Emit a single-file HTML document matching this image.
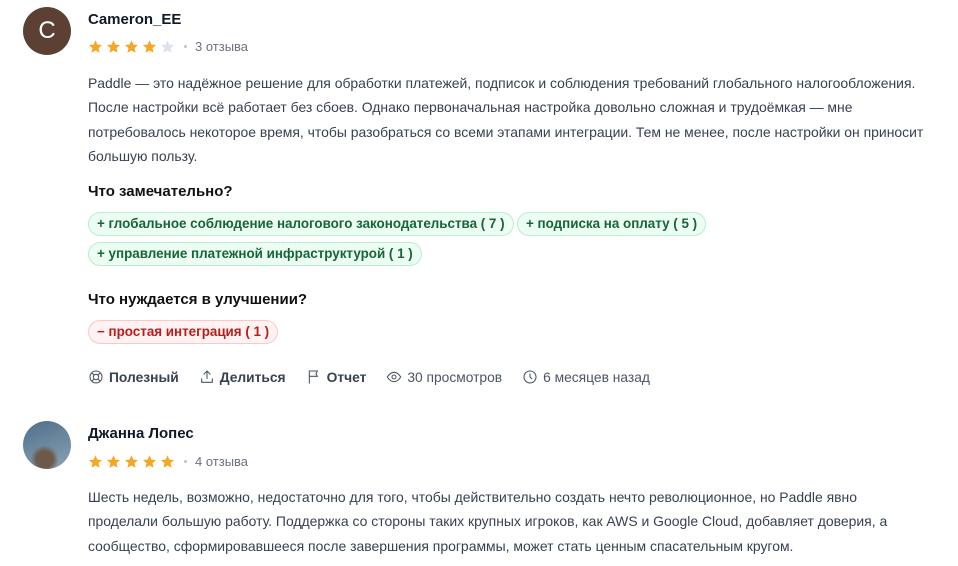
<!DOCTYPE html>
<html><head><meta charset="utf-8"><style>
*{margin:0;padding:0;box-sizing:border-box}
body{width:958px;height:566px;overflow:hidden;background:#fff;font-family:"Liberation Sans","Noto Sans CJK SC",sans-serif;color:#1f2328;position:relative}
.abs{position:absolute}
.av{left:23px;width:48px;height:48px;border-radius:50%}
.name{left:88px;font-size:15px;font-weight:bold;color:#111827}
.stars{left:88px;font-size:13px;display:flex;align-items:center;color:#6b7280}
.stars svg{width:15px;height:15px;margin-right:3px}
.dot{width:3px;height:3px;border-radius:50%;background:#c0c4cc;margin:0 8px 0 6px}
.txt{left:88px;width:870px;font-size:13.95px;line-height:24.3px;color:#374151;white-space:nowrap}
.h{left:88px;font-size:15px;font-weight:bold;color:#111}
.chip{position:absolute;height:24px;border-radius:12px;font-size:13.4px;font-weight:bold;line-height:22px;padding:0 8px;white-space:nowrap}
.g{background:#ecfdf3;border:1px solid #b7efcc;color:#166534}
.r{background:#fef2f2;border:1px solid #fcc9c9;color:#b91c1c}
.act{position:absolute;top:369px;left:88px;display:flex;font-size:13.8px;color:#4b5563;align-items:center}
.act span{display:flex;align-items:center;margin-right:20px}
.act svg{width:16px;height:16px;margin-right:5px;fill:none;stroke:#4b5563;stroke-width:1.6}
.b{font-weight:bold;color:#374151}
</style></head><body>
<div class="abs av" style="top:7px;background:#5c4033;color:#fff;font-size:24px;text-align:center;line-height:48px">C</div>
<div class="abs name" style="top:11px">Cameron_EE</div>
<div class="abs stars" style="top:39px">
<svg viewBox="0 0 24 24"><path fill="#f5a623" d="M12 2l3 6.9 7.5.7-5.7 5 1.7 7.4L12 18.3 5.5 22l1.7-7.4-5.7-5 7.5-.7z"/></svg>
<svg viewBox="0 0 24 24"><path fill="#f5a623" d="M12 2l3 6.9 7.5.7-5.7 5 1.7 7.4L12 18.3 5.5 22l1.7-7.4-5.7-5 7.5-.7z"/></svg>
<svg viewBox="0 0 24 24"><path fill="#f5a623" d="M12 2l3 6.9 7.5.7-5.7 5 1.7 7.4L12 18.3 5.5 22l1.7-7.4-5.7-5 7.5-.7z"/></svg>
<svg viewBox="0 0 24 24"><path fill="#f5a623" d="M12 2l3 6.9 7.5.7-5.7 5 1.7 7.4L12 18.3 5.5 22l1.7-7.4-5.7-5 7.5-.7z"/></svg>
<svg viewBox="0 0 24 24"><path fill="#dde3ec" d="M12 2l3 6.9 7.5.7-5.7 5 1.7 7.4L12 18.3 5.5 22l1.7-7.4-5.7-5 7.5-.7z"/></svg>
<div class="dot"></div>3 отзыва</div>
<div class="abs txt" style="top:71px">Paddle — это надёжное решение для обработки платежей, подписок и соблюдения требований глобального налогообложения.<br>После настройки всё работает без сбоев. Однако первоначальная настройка довольно сложная и трудоёмкая — мне<br>потребовалось некоторое время, чтобы разобраться со всеми этапами интеграции. Тем не менее, после настройки он приносит<br>большую пользу.</div>
<div class="abs h" style="top:183px">Что замечательно?</div>
<div class="chip g" style="left:88px;top:212px">+ глобальное соблюдение налогового законодательства ( 7 )</div>
<div class="chip g" style="left:517px;top:212px">+ подписка на оплату ( 5 )</div>
<div class="chip g" style="left:88px;top:242px">+ управление платежной инфраструктурой ( 1 )</div>
<div class="abs h" style="top:291px">Что нуждается в улучшении?</div>
<div class="chip r" style="left:88px;top:320px">− простая интеграция ( 1 )</div>
<div class="act">
<span class="b"><svg viewBox="0 0 24 24"><circle cx="12" cy="12" r="9"/><circle cx="12" cy="12" r="4"/><path d="M5.6 5.6l3.6 3.6M18.4 5.6l-3.6 3.6M5.6 18.4l3.6-3.6M18.4 18.4l-3.6-3.6"/></svg>Полезный</span>
<span class="b"><svg viewBox="0 0 24 24"><path d="M12 15V3M7 8l5-5 5 5M4 14v6h16v-6"/></svg>Делиться</span>
<span class="b"><svg viewBox="0 0 24 24"><path d="M5 22V3h12l-2 4 2 4H5"/></svg>Отчет</span>
<span><svg viewBox="0 0 24 24"><path d="M2 12s4-7 10-7 10 7 10 7-4 7-10 7S2 12 2 12z"/><circle cx="12" cy="12" r="3"/></svg>30 просмотров</span>
<span><svg viewBox="0 0 24 24"><circle cx="12" cy="12" r="9"/><path d="M12 7v5l3 3"/></svg>6 месяцев назад</span>
</div>
<div class="abs av" style="top:421px;background:radial-gradient(circle at 45% 80%,#6b5a4a 0 18%,transparent 30%),linear-gradient(160deg,#4e6f8a,#8aa3b5)"></div>
<div class="abs name" style="top:425px">Джанна Лопес</div>
<div class="abs stars" style="top:454px">
<svg viewBox="0 0 24 24"><path fill="#f5a623" d="M12 2l3 6.9 7.5.7-5.7 5 1.7 7.4L12 18.3 5.5 22l1.7-7.4-5.7-5 7.5-.7z"/></svg>
<svg viewBox="0 0 24 24"><path fill="#f5a623" d="M12 2l3 6.9 7.5.7-5.7 5 1.7 7.4L12 18.3 5.5 22l1.7-7.4-5.7-5 7.5-.7z"/></svg>
<svg viewBox="0 0 24 24"><path fill="#f5a623" d="M12 2l3 6.9 7.5.7-5.7 5 1.7 7.4L12 18.3 5.5 22l1.7-7.4-5.7-5 7.5-.7z"/></svg>
<svg viewBox="0 0 24 24"><path fill="#f5a623" d="M12 2l3 6.9 7.5.7-5.7 5 1.7 7.4L12 18.3 5.5 22l1.7-7.4-5.7-5 7.5-.7z"/></svg>
<svg viewBox="0 0 24 24"><path fill="#f5a623" d="M12 2l3 6.9 7.5.7-5.7 5 1.7 7.4L12 18.3 5.5 22l1.7-7.4-5.7-5 7.5-.7z"/></svg>
<div class="dot"></div>4 отзыва</div>
<div class="abs txt" style="top:485px">Шесть недель, возможно, недостаточно для того, чтобы действительно создать нечто революционное, но Paddle явно<br>проделали большую работу. Поддержка со стороны таких крупных игроков, как AWS и Google Cloud, добавляет доверия, а<br>сообщество, сформировавшееся после завершения программы, может стать ценным спасательным кругом.</div>
</body></html>
